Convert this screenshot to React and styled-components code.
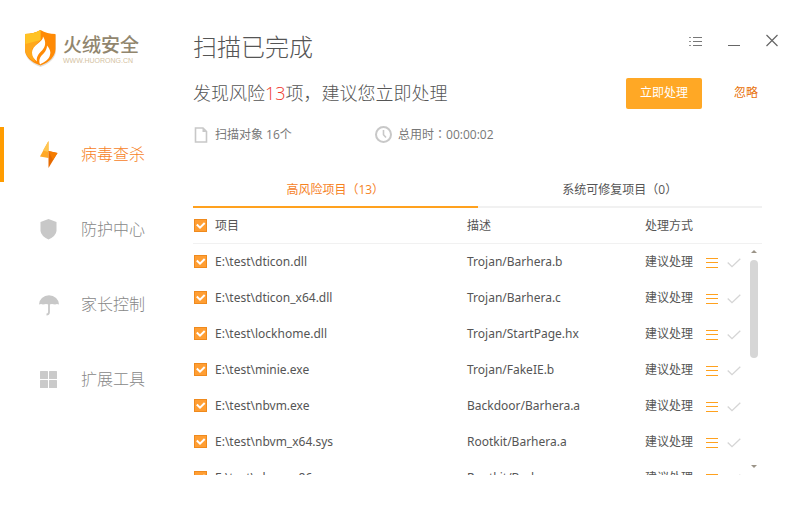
import React, { useState } from 'react';
import styled, { createGlobalStyle, css } from 'styled-components';

const GlobalStyle = createGlobalStyle`
  * {
    box-sizing: border-box;
  }
  body {
    margin: 0;
    background: #fff;
    color: #555;
    font: 12px/18px 'Open Sans', 'Noto Sans CJK SC', sans-serif;
  }
  button {
    padding: 0;
    border: 0;
    background: none;
    color: inherit;
    font: inherit;
    cursor: pointer;
  }
  svg {
    display: block;
  }
`;

const Window = styled.div`
  display: flex;
  height: 100vh;
  overflow: hidden;
`;

const Sidebar = styled.aside`
  flex: none;
  width: 193px;
`;

const Brand = styled.div`
  display: flex;
  align-items: center;
  gap: 6px;
  height: 107px;
  padding: 0 0 10px 24px;
  margin-bottom: 20px;
`;

const BrandName = styled.div`
  color: #91866e;
  font-size: 19px;
  font-weight: 500;
  line-height: 24px;
`;

const BrandSite = styled.div`
  color: #d4c2a2;
  font: 7px/8px 'Liberation Sans', sans-serif;
`;

const Nav = styled.nav`
  display: flex;
  flex-direction: column;
  gap: 20px;
`;

const NavLink = styled.a`
  display: flex;
  align-items: center;
  gap: 20px;
  height: 55px;
  padding-left: 32px;
  border-left: 4px solid transparent;
  color: #888;
  font-size: 16px;
  font-weight: 300;
  text-decoration: none;
  ${(props) => props.$active && css`
    border-color: #ff9c00;
    color: #f6821f;
  `}
`;

const NavLabel = styled.span`
  padding-bottom: 2px;
`;

const Main = styled.main`
  flex: 1;
  display: flex;
  flex-direction: column;
  min-width: 0;
  padding-bottom: 40px;
`;

const Header = styled.header`
  display: flex;
  justify-content: space-between;
  height: 69px;
  padding: 30px 20px 0 0;
`;

const Title = styled.h1`
  margin: 0;
  font-size: 24px;
  font-weight: 300;
  line-height: 34px;
`;

const WindowButtons = styled.div`
  display: flex;
  gap: 22px;
  height: 22px;
`;

const IconButton = styled.button`
  display: flex;
  align-items: center;
  justify-content: center;
  width: 16px;
  height: 22px;
`;

const Content = styled.div`
  flex: 1;
  display: flex;
  flex-direction: column;
  min-height: 0;
  padding-right: 38px;
`;

const Summary = styled.div`
  display: flex;
  align-items: center;
  height: 48px;
`;

const Message = styled.p`
  flex: 1;
  margin: 0;
  font-size: 18px;
  font-weight: 300;
  line-height: 26px;
`;

const Count = styled.span`
  color: #f0372a;
`;

// full-width punctuation centred in its cell
const Mark = styled.span`
  font-family: 'Noto Sans CJK TC', sans-serif;
`;

const HandleButton = styled.button`
  width: 76px;
  height: 31px;
  border-radius: 2px;
  background: #ffa825;
  color: #fff;
`;

const IgnoreButton = styled.button`
  width: 60px;
  height: 31px;
  padding: 0 4px 0 32px;
  color: #e8710a;
  white-space: nowrap;
`;

const Stats = styled.div`
  display: grid;
  grid-template-columns: 182px 1fr;
  height: 35px;
  margin-bottom: 20px;
  color: #777;
`;

const Stat = styled.div`
  display: flex;
  align-items: center;
  gap: 6px;
`;

const Tabs = styled.div`
  display: flex;
`;

const Tab = styled.button`
  flex: 1;
  height: 36px;
  padding-top: 2px;
  border-bottom: 2px solid #f1f1f1;
  ${(props) => props.$active && css`
    border-color: #ffa11e;
    color: #f6821f;
  `}
`;

const ListArea = styled.div`
  position: relative;
  flex: 1;
  min-height: 0;
  overflow: hidden;
`;

const Table = styled.table`
  width: 100%;
  border-collapse: separate;
  border-spacing: 0;
  table-layout: fixed;
`;

const Th = styled.th`
  width: ${(props) => props.$width || 'auto'};
  height: 36px;
  padding: 0;
  border-bottom: 1px solid #f1f1f1;
  font-weight: 400;
  text-align: left;
`;

const Td = styled.td`
  height: 36px;
  padding: 0;
`;

const CheckLabel = styled.label`
  display: flex;
  align-items: center;
  gap: 8px;
  padding-left: 1px;
`;

const CheckBox = styled.span`
  display: inline-grid;
  padding-bottom: 1px;
  > * {
    grid-area: 1 / 1;
  }
  svg {
    pointer-events: none;
  }
`;

const CheckInput = styled.input`
  appearance: none;
  width: 13px;
  height: 13px;
  margin: 0;
  border: 1px solid #ef8a1d;
  background: #fff;
  &:checked {
    background: #ff9e33;
  }
`;

const FileName = styled.span`
  font-family: 'Noto Sans', sans-serif;
`;

const Actions = styled.div`
  display: flex;
  align-items: center;
  gap: 11px;
`;

const RowIcons = styled.div`
  display: flex;
  gap: 6px;
  padding-top: 2px;
`;

const Scrollbar = styled.div`
  position: absolute;
  top: 42px;
  right: 4px;
  bottom: 7px;
  display: flex;
  flex-direction: column;
  align-items: center;
  width: 8px;
`;

const Thumb = styled.div`
  flex: none;
  width: 8px;
  height: 98px;
  margin: 7px 0 auto;
  border-radius: 4px;
  background: #d6d6d6;
`;

const LogoIcon = () => (
  <svg width="33" height="38" viewBox="0 0 33 38">
    <path d="M1 5Q10 5 16.500 1Q23 5 32 5V20Q32 31 16.500 37Q1 31 1 20Z" fill="#e3dfd8" />
    <path d="M1 4Q10 4 16.500 0Q23 4 31.500 4V19Q31 30 16.500 35.500Q1 30 1 19Z" fill="#ff8a05" />
    <path d="M1 4Q10 4 16.500 0V10L8 19L11 32Q1 27 1 19Z" fill="#ffa81c" />
    <path d="M1 4Q10 4 16.500 0V10L1.500 14Z" fill="#ffc325" />
    <path d="M19 6.500C19.500 12 8 15 8 22.500C8 26.500 10 29 13 31.500C12 27 14.500 24 18 20.500C21.500 17 22.500 12 19 6.500Z" fill="#fff" />
    <path d="M23 15.500C26 19 27 22 26 25C25 30 20 32 16 34.500C14 29 17 26 20 23C22 20.500 23 18 23 15.500Z" fill="#fff" />
  </svg>
);

const BoltIcon = () => (
  <svg width="25" height="27" viewBox="0 0 25 27">
    <path d="M12.500 0L4 15.500L12.500 17Z" fill="#ffa928" />
    <path d="M12.500 0L7 9.500L12.500 11Z" fill="#ffc550" />
    <path d="M12.500 10L21.500 12L12.500 27Z" fill="#e66a00" />
    <path d="M12.500 10L21.500 12L17 19Z" fill="#f57c00" />
  </svg>
);

const ShieldIcon = () => (
  <svg width="25" height="24" viewBox="0 0 25 24">
    <path d="M12.500 1L20.500 4V13Q20 18 12.500 21.500Q5 18 4.500 13V4Z" fill="#c8c8c8" />
  </svg>
);

const UmbrellaIcon = () => (
  <svg width="25" height="22" viewBox="0 0 25 22">
    <path d="M3 10.500A9.800 9 0 0 1 23 10.500Q21 9.500 19 10.500Q16 9.500 13 10.500Q10 9.500 7 10.500Q5 9.500 3 10.500Z" fill="#c8c8c8" />
    <path d="M13 10V18Q13 20.500 10.500 20.500" fill="none" stroke="#c8c8c8" strokeWidth="1.800" />
  </svg>
);

const ToolsIcon = () => (
  <svg width="25" height="17" viewBox="0 0 25 17" fill="#cacaca">
    <rect x="4" y="0" width="8" height="8" rx=".5" />
    <rect x="13" y="0" width="8" height="8" rx=".5" />
    <rect x="4" y="9" width="8" height="8" rx=".5" />
    <rect x="13" y="9" width="8" height="8" rx=".5" />
  </svg>
);

const ListIcon = () => (
  <svg width="14" height="12" viewBox="0 0 14 12" fill="#777">
    <path d="M4 2h9v1H4zM4 6h9v1H4zM4 10h9v1H4z" />
    <path d="M0 2h2v1H0zM0 6h2v1H0zM0 10h2v1H0z" opacity=".8" />
  </svg>
);

const MinimizeIcon = () => (
  <svg width="12" height="12" viewBox="0 0 12 12">
    <path d="M0 10h12v1H0z" fill="#666" />
  </svg>
);

const CloseIcon = () => (
  <svg width="12" height="14" viewBox="0 0 12 14">
    <path d="M.5 1L11.500 12M11.500 1L.5 12" stroke="#666" strokeWidth="1.200" />
  </svg>
);

const FileIcon = () => (
  <svg width="16" height="16" viewBox="0 0 16 16">
    <path d="M2.500 1H10L13.500 4.500V15H2.500Z" fill="none" stroke="#c8c8c8" strokeWidth="1.600" />
    <path d="M9.500 1V5H13.500Z" fill="#c8c8c8" />
  </svg>
);

const ClockIcon = () => (
  <svg width="17" height="17" viewBox="0 0 17 17" fill="none" stroke="#c8c8c8" strokeWidth="2">
    <circle cx="8.500" cy="8.500" r="7.500" />
    <path d="M8.500 4V8.800L11 11.500" strokeWidth="1.600" />
  </svg>
);

const MenuIcon = () => (
  <svg width="12" height="10" viewBox="0 0 12 10" fill="#ffa11e">
    <path d="M0 0h12v1H0zM0 4h12v1H0zM0 9h12v1H0z" />
  </svg>
);

const TickIcon = () => (
  <svg width="14" height="10" viewBox="0 0 14 10">
    <path d="M.7 4.500L5 8.700L13.300 .7" fill="none" stroke="#d5d5d5" strokeWidth="1.300" />
  </svg>
);

const Arrow = ({ down }) => (
  <svg width="6" height="3" viewBox="0 0 6 3">
    <path d={down ? 'M0 0H6L3 3Z' : 'M0 3H6L3 0Z'} fill="#9b9488" />
  </svg>
);

const navItems = [
  { label: '病毒查杀', Icon: BoltIcon },
  { label: '防护中心', Icon: ShieldIcon },
  { label: '家长控制', Icon: UmbrellaIcon },
  { label: '扩展工具', Icon: ToolsIcon },
];

const tabs = ['高风险项目（13）', '系统可修复项目（0）'];

const risks = [
  { file: 'E:\\test\\dticon.dll', virus: 'Trojan/Barhera.b' },
  { file: 'E:\\test\\dticon_x64.dll', virus: 'Trojan/Barhera.c' },
  { file: 'E:\\test\\lockhome.dll', virus: 'Trojan/StartPage.hx' },
  { file: 'E:\\test\\minie.exe', virus: 'Trojan/FakeIE.b' },
  { file: 'E:\\test\\nbvm.exe', virus: 'Backdoor/Barhera.a' },
  { file: 'E:\\test\\nbvm_x64.sys', virus: 'Rootkit/Barhera.a' },
  { file: 'E:\\test\\nbvm_x86.sys', virus: 'Rootkit/Barhera.a' },
];

const Check = ({ children }) => (
  <CheckLabel>
    <CheckBox>
      <CheckInput type="checkbox" defaultChecked />
      <svg width="13" height="13" viewBox="0 0 13 13">
        <path d="M2.800 5.500L6 8.700L10.700 4" fill="none" stroke="#fff" strokeWidth="2" />
      </svg>
    </CheckBox>
    {children}
  </CheckLabel>
);

const App = () => {
  const [activeNav, setActiveNav] = useState(0);
  const [activeTab, setActiveTab] = useState(0);

  return (
    <Window>
      <GlobalStyle />
      <Sidebar>
        <Brand>
          <LogoIcon />
          <div>
            <BrandName>火绒安全</BrandName>
            <BrandSite>WWW.HUORONG.CN</BrandSite>
          </div>
        </Brand>
        <Nav>
          {navItems.map(({ label, Icon }, i) => (
            <NavLink key={label} href="#" $active={i === activeNav} onClick={() => setActiveNav(i)}>
              <Icon />
              <NavLabel>{label}</NavLabel>
            </NavLink>
          ))}
        </Nav>
      </Sidebar>
      <Main>
        <Header>
          <Title>扫描已完成</Title>
          <WindowButtons>
            <IconButton><ListIcon /></IconButton>
            <IconButton><MinimizeIcon /></IconButton>
            <IconButton><CloseIcon /></IconButton>
          </WindowButtons>
        </Header>
        <Content>
          <Summary>
            <Message>发现风险<Count>13</Count>项，建议您立即处理</Message>
            <HandleButton>立即处理</HandleButton>
            <IgnoreButton>忽略</IgnoreButton>
          </Summary>
          <Stats>
            <Stat><FileIcon />扫描对象 16个</Stat>
            <Stat><ClockIcon /><span>总用时<Mark>：</Mark>00:00:02</span></Stat>
          </Stats>
          <Tabs role="tablist">
            {tabs.map((tab, i) => (
              <Tab key={tab} role="tab" $active={i === activeTab} onClick={() => setActiveTab(i)}>{tab}</Tab>
            ))}
          </Tabs>
          <ListArea>
            <Table>
              <thead>
                <tr>
                  <Th><Check>项目</Check></Th>
                  <Th $width="178px">描述</Th>
                  <Th $width="117px">处理方式</Th>
                </tr>
              </thead>
              <tbody>
                {risks.map(({ file, virus }) => (
                  <tr key={file}>
                    <Td><Check><FileName>{file}</FileName></Check></Td>
                    <Td><FileName>{virus}</FileName></Td>
                    <Td>
                      <Actions>
                        建议处理
                        <RowIcons>
                          <IconButton><MenuIcon /></IconButton>
                          <IconButton><TickIcon /></IconButton>
                        </RowIcons>
                      </Actions>
                    </Td>
                  </tr>
                ))}
              </tbody>
            </Table>
            <Scrollbar>
              <Arrow />
              <Thumb />
              <Arrow down />
            </Scrollbar>
          </ListArea>
        </Content>
      </Main>
    </Window>
  );
};

export default App;
